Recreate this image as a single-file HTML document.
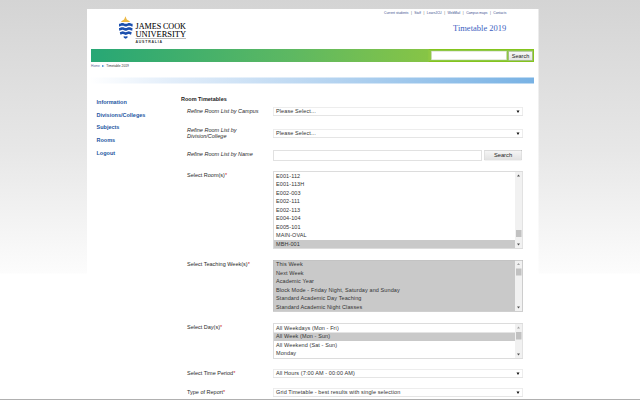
<!DOCTYPE html>
<html><head><meta charset="utf-8"><style>
html,body{margin:0;padding:0;width:640px;height:400px;overflow:hidden;}
body{background:linear-gradient(to bottom,#d4d4d4 0px,#e7e7e7 150px,#fcfcfc 273px,#fff 274px,#fff 400px);position:relative;}
#bl{position:absolute;left:0;top:399px;width:640px;height:1px;background:#b0b0b0;}
#w{position:absolute;left:0;top:0;width:1280px;height:800px;transform:scale(.5);transform-origin:0 0;font-family:"Liberation Sans",sans-serif;font-size:11px;color:#333;}
.a{position:absolute;white-space:nowrap;}
#box{position:absolute;left:174px;top:18px;width:903px;height:782px;background:#fff;}
#toplinks{left:768px;top:21px;font-size:6.6px;line-height:10px;color:#3b4f8f;}
#toplinks i{font-style:normal;color:#555;padding:0 5px;}
#tt{left:906px;top:47px;font-family:"Liberation Serif",serif;font-size:17px;line-height:20px;color:#3d5fbf;}
#green{left:182px;top:98px;width:886px;height:26px;background:linear-gradient(to right,#27a775 0%,#5db862 45%,#8cc642 80%,#8ec63f 100%);}
#sform{left:857px;top:98px;width:207px;height:22px;border:2px solid #84c41e;border-left-color:#8ec845;background:#8ec845;}
#sinput{left:863px;top:102px;width:150px;height:18px;background:#fff;border:1px solid #d0d8c0;box-sizing:border-box;}
#sbtn{left:1017px;top:102px;width:48px;height:19px;background:linear-gradient(#f8f8f8,#e4e4e4);border:1px solid #b8b8b8;box-sizing:border-box;font-size:11px;line-height:17px;text-align:center;color:#222;}
#crumb{left:182px;top:126px;font-size:6.6px;line-height:12px;color:#5a6a9a;}
#crumb b{display:inline-block;width:0;height:0;border-left:5.5px solid #3b87cf;border-top:2.8px solid transparent;border-bottom:2.8px solid transparent;margin:0 4px 0 4px;vertical-align:0.5px;}
#crumb span{color:#333;}
#blue{left:178px;top:155px;width:890px;height:12px;background:linear-gradient(to right,#ffffff 0%,#e3eefa 18%,#b4d3f0 55%,#78b2e4 100%);}
.nav{left:193px;font-weight:bold;font-size:11px;line-height:13px;color:#1d56a2;}
#h{left:362px;top:192px;font-weight:bold;font-size:11px;line-height:13px;color:#222;}
.lab{left:374px;font-size:11px;line-height:13px;color:#2a2a2a;}
.lab.it{font-style:italic;}
.lab em{font-style:normal;color:#d0202a;}
.sel{left:546px;width:500px;height:16px;border:1px solid #b9b9b9;border-bottom-color:#999;box-sizing:border-box;background:#fff;border-radius:1px;}
.sel .t{position:absolute;left:5px;top:0px;line-height:13px;color:#333;letter-spacing:.2px;}
.sel .ar{position:absolute;right:6px;top:5px;width:0;height:0;border-left:3.5px solid transparent;border-right:3.5px solid transparent;border-top:5px solid #111;}
.lb{left:546px;width:500px;border:1px solid #b9b9b9;box-sizing:border-box;background:#fff;overflow:hidden;}
.lb .r{position:relative;height:17px;line-height:15px;padding-left:5px;color:#333;margin-right:15px;letter-spacing:.2px;}
.lb .r.s{background:#c9c9c9;}
.lb .sb{position:absolute;right:0;top:0;bottom:0;width:15px;background:#f1f1f1;}
.lb .sb .up,.lb .sb .dn{position:absolute;left:4px;width:0;height:0;border-left:3.5px solid transparent;border-right:3.5px solid transparent;}
.lb .sb .up{top:5px;border-bottom:4px solid #505050;}
.lb .sb .dn{bottom:5px;border-top:4px solid #505050;}
.lb .sb .th{position:absolute;left:2px;width:11px;background:#c1c1c1;}
</style></head><body>
<div id="w">
<div id="box"></div>
<!-- logo -->
<svg class="a" style="left:230px;top:26px" width="150" height="64" viewBox="230 26 150 64">
  <path d="M242,44 C243.5,41 246.5,40.5 248.5,38.5 L250.9,32.6 L253.3,38.5 C255.3,40.5 258.5,41 260,44 Z" fill="#edb944"/>
  <path d="M238.0,47.7 239.7,47.4 241.4,46.8 243.1,46.2 244.8,45.9 246.5,46.2 248.2,46.8 249.9,47.4 251.6,47.7 253.3,47.4 255.0,46.8 256.7,46.2 258.4,45.9 260.1,46.2 261.8,46.8 263.5,47.4 265.2,47.7 265.2,53.1 263.5,52.8 261.8,52.2 260.1,51.6 258.4,51.3 256.7,51.6 255.0,52.2 253.3,52.8 251.6,53.1 249.9,52.8 248.2,52.2 246.5,51.6 244.8,51.3 243.1,51.6 241.4,52.2 239.7,52.8 238.0,53.1Z" fill="#1b4fae"/>
  <path d="M238.0,56.1 239.7,55.8 241.4,55.2 243.1,54.6 244.8,54.3 246.4,54.6 248.1,55.2 249.8,55.8 251.5,56.1 253.2,55.8 254.9,55.2 256.6,54.6 258.2,54.3 259.9,54.6 261.6,55.2 263.3,55.8 265.0,56.1 264.5,61.5 262.9,61.1 261.2,60.4 259.6,59.9 258.0,59.7 256.4,60.0 254.8,60.7 253.1,61.3 251.5,61.5 249.9,61.3 248.2,60.7 246.6,60.0 245.0,59.7 243.4,59.9 241.8,60.4 240.1,61.1 238.5,61.5Z" fill="#1b4fae"/>
  <path d="M239.5,64.5 241.0,64.2 242.5,63.6 244.0,63.0 245.5,62.7 247.0,63.0 248.5,63.6 250.0,64.2 251.5,64.5 253.0,64.2 254.5,63.6 256.0,63.0 257.5,62.7 259.0,63.0 260.5,63.6 262.0,64.2 263.5,64.5 262.0,69.6 260.7,69.1 259.4,68.5 258.1,68.1 256.8,68.2 255.4,68.6 254.1,69.2 252.8,69.7 251.5,69.9 250.2,69.7 248.9,69.2 247.6,68.6 246.2,68.2 244.9,68.1 243.6,68.5 242.3,69.1 241.0,69.6Z" fill="#1b4fae"/>
  <path d="M246.5,73.5 Q249,72 251.2,73.2 Q253.5,72 256,73.5 L254,76 L251.2,77.5 L248.5,76 Z" fill="#1b4fae"/>
  <text x="271" y="57.5" font-family="Liberation Serif" font-size="17" textLength="101" lengthAdjust="spacingAndGlyphs" fill="#000" stroke="#000" stroke-width="0.1">JAMES&#8201;COOK</text>
  <text x="271" y="74" font-family="Liberation Serif" font-size="17.5" textLength="101" lengthAdjust="spacingAndGlyphs" fill="#000" stroke="#000" stroke-width="0.1">UNIVERSITY</text>
  <rect x="271" y="76.5" width="101" height="0.8" fill="#555"/>
  <text x="271" y="86" font-family="Liberation Sans" font-weight="bold" font-size="7" textLength="53" lengthAdjust="spacing" fill="#333">AUSTRALIA</text>
</svg>
<div id="toplinks" class="a">Current students<i>|</i>Staff<i>|</i>LearnJCU<i>|</i>WebMail<i>|</i>Campus maps<i>|</i>Contacts</div>
<div id="tt" class="a">Timetable 2019</div>
<div id="green" class="a"></div>
<div id="sform" class="a"></div>
<div id="sinput" class="a"></div>
<div id="sbtn" class="a">Search</div>
<div id="crumb" class="a">Home<b></b><span>Timetable 2019</span></div>
<div id="blue" class="a"></div>

<div class="a nav" style="top:197px">Information</div>
<div class="a nav" style="top:223.5px">Divisions/Colleges</div>
<div class="a nav" style="top:248px">Subjects</div>
<div class="a nav" style="top:274px">Rooms</div>
<div class="a nav" style="top:300px">Logout</div>

<div id="h" class="a">Room Timetables</div>

<div class="a lab it" style="top:215.5px">Refine Room List by Campus</div>
<div class="a sel" style="top:215px"><span class="t">Please Select...</span><span class="ar"></span></div>

<div class="a lab it" style="top:253px">Refine Room List by<br>Division/College</div>
<div class="a sel" style="top:259px"><span class="t">Please Select...</span><span class="ar"></span></div>

<div class="a lab it" style="top:301px">Refine Room List by Name</div>
<div class="a" style="left:546px;top:301px;width:418px;height:20px;border:1px solid #c3c3c3;box-sizing:border-box;background:#fff;"></div>
<div class="a" style="left:968px;top:300px;width:76px;height:21px;border:1px solid #b8b8b8;box-sizing:border-box;background:linear-gradient(#f6f6f6,#e2e2e2);text-align:center;line-height:19px;color:#1a1a1a;border-radius:2px;border-bottom-color:#999;font-size:11.5px;">Search</div>

<div class="a lab" style="top:343.5px">Select Room(s)<em>*</em></div>
<div class="a lb" style="top:343px;height:154px">
  <div class="r">E001-112</div><div class="r">E001-113H</div><div class="r">E002-003</div><div class="r">E002-111</div><div class="r">E002-113</div><div class="r">E004-104</div><div class="r">E005-101</div><div class="r">MAIN-OVAL</div><div class="r s">MBH-001</div>
  <div class="sb"><div class="up"></div><div class="th" style="top:116px;height:14px"></div><div class="dn"></div></div>
</div>

<div class="a lab" style="top:521.5px">Select Teaching Week(s)<em>*</em></div>
<div class="a lb" style="top:520px;height:103px;background:#c9c9c9">
  <div class="r s">This Week</div><div class="r s">Next Week</div><div class="r s">Academic Year</div><div class="r s">Block Mode - Friday Night, Saturday and Sunday</div><div class="r s">Standard Academic Day Teaching</div><div class="r s">Standard Academic Night Classes</div>
  <div class="sb"><div class="up" style="border-bottom-color:#a3a3a3"></div><div class="th" style="top:16px;height:14px"></div><div class="dn"></div></div>
</div>

<div class="a lab" style="top:647.5px">Select Day(s)<em>*</em></div>
<div class="a lb" style="top:647px;height:70px">
  <div class="r">All Weekdays (Mon - Fri)</div><div class="r s">All Week (Mon - Sun)</div><div class="r">All Weekend (Sat - Sun)</div><div class="r">Monday</div>
  <div class="sb"><div class="up" style="border-bottom-color:#a3a3a3"></div><div class="th" style="top:16px;height:15px"></div><div class="dn"></div></div>
</div>

<div class="a lab" style="top:739.5px">Select Time Period<em>*</em></div>
<div class="a sel" style="top:739px"><span class="t">All Hours (7:00 AM - 00:00 AM)</span><span class="ar"></span></div>

<div class="a lab" style="top:777.5px">Type of Report<em>*</em></div>
<div class="a sel" style="top:777px"><span class="t">Grid Timetable - best results with single selection</span><span class="ar"></span></div>
</div>
<div id="bl"></div>
</body></html>
